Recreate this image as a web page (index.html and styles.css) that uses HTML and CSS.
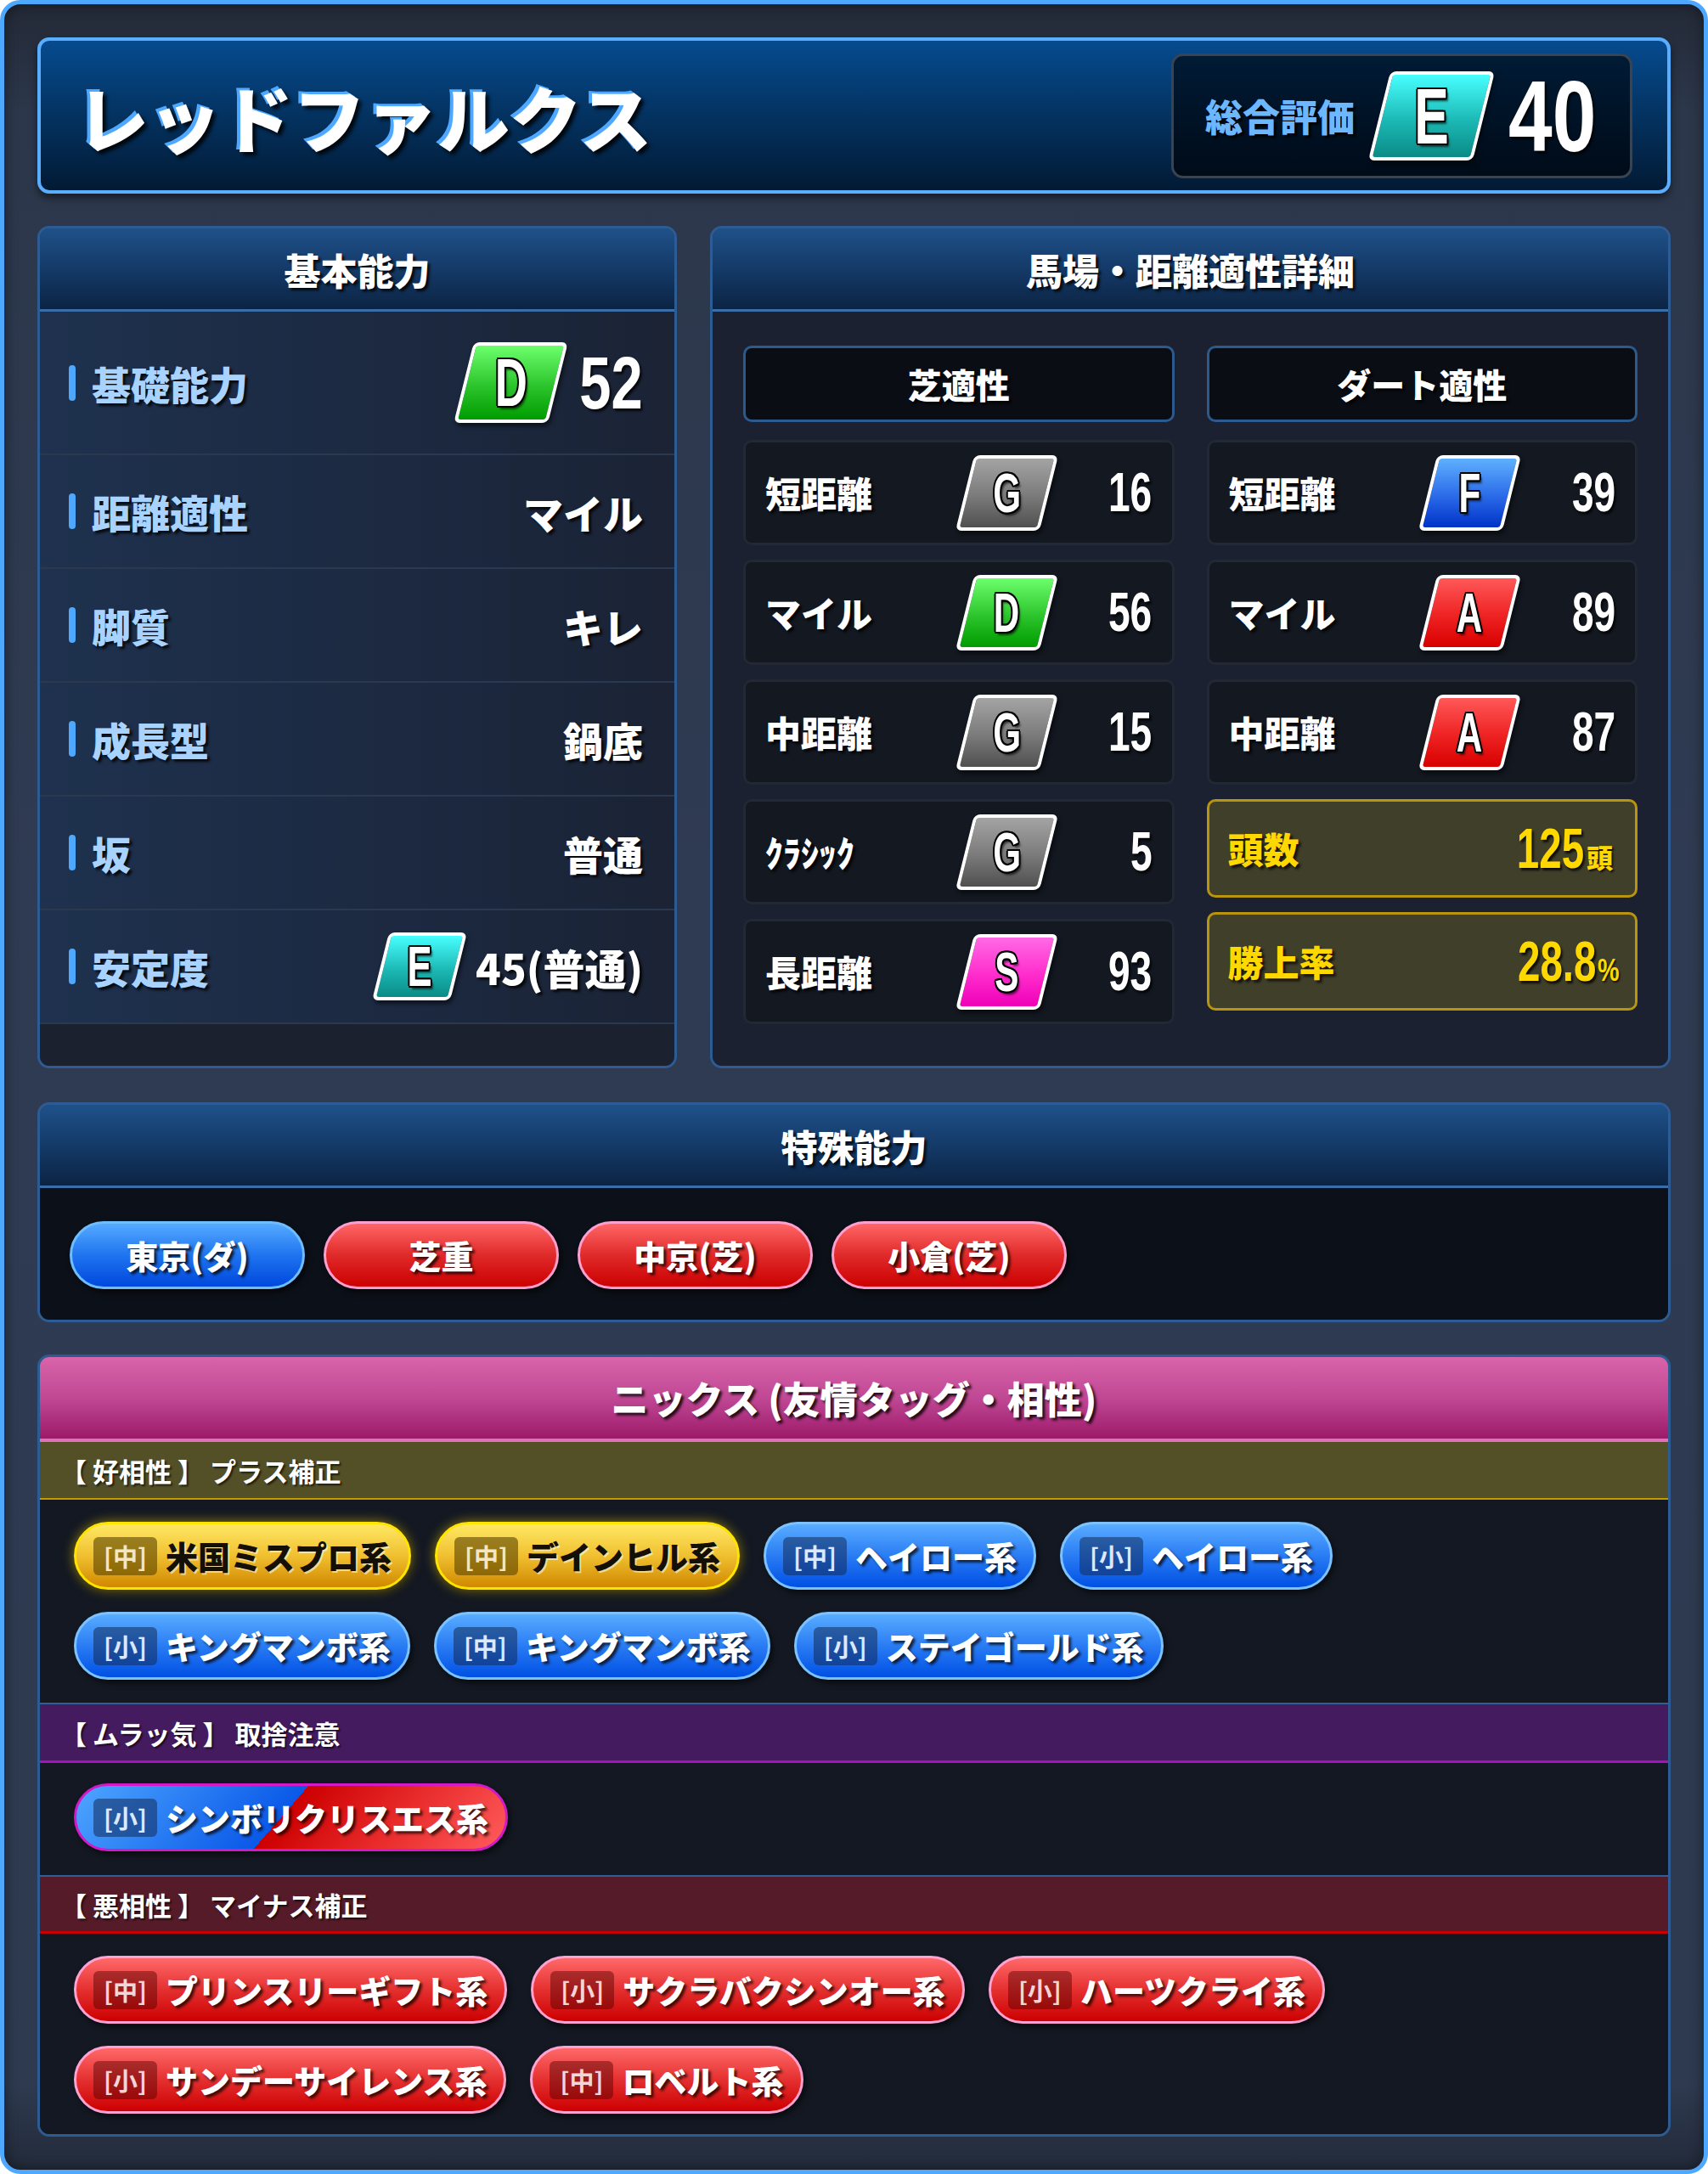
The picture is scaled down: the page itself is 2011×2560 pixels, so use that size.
FILE: index.html
```html
<!DOCTYPE html>
<html lang="ja">
<head>
<meta charset="utf-8">
<title>レッドファルクス</title>
<link rel="stylesheet" href="styles.css">
</head>
<body>
<div class="frame">
  <header class="title-bar">
    <h1 class="horse-name">レッドファルクス</h1>
    <div class="overall">
      <span class="overall-label">総合評価</span>
      <span class="grade grade-xl grade-e"><span class="grade-letter">E</span></span>
      <span class="num overall-num">40</span>
    </div>
  </header>

  <div class="top-grid">
    <section class="panel">
      <h2 class="panel-head">基本能力</h2>
      <div class="basic-body">
        <div class="stat-row first">
          <span class="stat-label">基礎能力</span>
          <span class="stat-value">
            <span class="grade grade-lg grade-d"><span class="grade-letter">D</span></span>
            <span class="num basic-num">52</span>
          </span>
        </div>
        <div class="stat-row">
          <span class="stat-label">距離適性</span>
          <span class="stat-value">マイル</span>
        </div>
        <div class="stat-row">
          <span class="stat-label">脚質</span>
          <span class="stat-value">キレ</span>
        </div>
        <div class="stat-row">
          <span class="stat-label">成長型</span>
          <span class="stat-value">鍋底</span>
        </div>
        <div class="stat-row">
          <span class="stat-label">坂</span>
          <span class="stat-value">普通</span>
        </div>
        <div class="stat-row">
          <span class="stat-label">安定度</span>
          <span class="stat-value">
            <span class="grade grade-md grade-e"><span class="grade-letter">E</span></span>
            <span class="stable-text">45(普通)</span>
          </span>
        </div>
        <div class="basic-foot"></div>
      </div>
    </section>

    <section class="panel">
      <h2 class="panel-head">馬場・距離適性詳細</h2>
      <div class="fit-body">
        <div class="fit-col">
          <div class="col-head">芝適性</div>
          <div class="cell">
            <span class="cell-label">短距離</span>
            <span class="grade grade-sm grade-g"><span class="grade-letter">G</span></span>
            <span class="num cell-num">16</span>
          </div>
          <div class="cell">
            <span class="cell-label">マイル</span>
            <span class="grade grade-sm grade-d"><span class="grade-letter">D</span></span>
            <span class="num cell-num">56</span>
          </div>
          <div class="cell">
            <span class="cell-label">中距離</span>
            <span class="grade grade-sm grade-g"><span class="grade-letter">G</span></span>
            <span class="num cell-num">15</span>
          </div>
          <div class="cell">
            <span class="cell-label">ｸﾗｼｯｸ</span>
            <span class="grade grade-sm grade-g"><span class="grade-letter">G</span></span>
            <span class="num cell-num">5</span>
          </div>
          <div class="cell">
            <span class="cell-label">長距離</span>
            <span class="grade grade-sm grade-s"><span class="grade-letter">S</span></span>
            <span class="num cell-num">93</span>
          </div>
        </div>
        <div class="fit-col">
          <div class="col-head">ダート適性</div>
          <div class="cell">
            <span class="cell-label">短距離</span>
            <span class="grade grade-sm grade-f"><span class="grade-letter">F</span></span>
            <span class="num cell-num">39</span>
          </div>
          <div class="cell">
            <span class="cell-label">マイル</span>
            <span class="grade grade-sm grade-a"><span class="grade-letter">A</span></span>
            <span class="num cell-num">89</span>
          </div>
          <div class="cell">
            <span class="cell-label">中距離</span>
            <span class="grade grade-sm grade-a"><span class="grade-letter">A</span></span>
            <span class="num cell-num">87</span>
          </div>
          <div class="yield">
            <span class="yield-label">頭数</span>
            <span class="yield-value"><span class="num yield-num">125</span><span class="yield-unit">頭</span></span>
          </div>
          <div class="yield">
            <span class="yield-label">勝上率</span>
            <span class="yield-value"><span class="num yield-num">28.8</span><span class="yield-unit pct">%</span></span>
          </div>
        </div>
      </div>
    </section>
  </div>

  <section class="panel special">
    <h2 class="panel-head">特殊能力</h2>
    <div class="special-body">
      <span class="pill pill-blue">東京(ダ)</span>
      <span class="pill pill-red">芝重</span>
      <span class="pill pill-red">中京(芝)</span>
      <span class="pill pill-red">小倉(芝)</span>
    </div>
  </section>

  <section class="panel nicks">
    <h2 class="panel-head nicks-head">ニックス (友情タッグ・相性)</h2>
    <div class="band band-good">【 好相性 】 プラス補正</div>
    <div class="chip-area area-good">
      <div class="chip-row">
        <span class="chip chip-gold"><span class="chip-tag">[中]</span><span class="chip-name">米国ミスプロ系</span></span>
        <span class="chip chip-gold"><span class="chip-tag">[中]</span><span class="chip-name">デインヒル系</span></span>
        <span class="chip chip-blue"><span class="chip-tag">[中]</span><span class="chip-name">ヘイロー系</span></span>
        <span class="chip chip-blue"><span class="chip-tag">[小]</span><span class="chip-name">ヘイロー系</span></span>
      </div>
      <div class="chip-row">
        <span class="chip chip-blue"><span class="chip-tag">[小]</span><span class="chip-name">キングマンボ系</span></span>
        <span class="chip chip-blue"><span class="chip-tag">[中]</span><span class="chip-name">キングマンボ系</span></span>
        <span class="chip chip-blue"><span class="chip-tag">[小]</span><span class="chip-name">ステイゴールド系</span></span>
      </div>
    </div>
    <div class="band band-mix">【 ムラッ気 】 取捨注意</div>
    <div class="chip-area area-mix">
      <div class="chip-row">
        <span class="chip chip-mix"><span class="chip-tag">[小]</span><span class="chip-name">シンボリクリスエス系</span></span>
      </div>
    </div>
    <div class="band band-bad">【 悪相性 】 マイナス補正</div>
    <div class="chip-area area-bad">
      <div class="chip-row">
        <span class="chip chip-red"><span class="chip-tag">[中]</span><span class="chip-name">プリンスリーギフト系</span></span>
        <span class="chip chip-red"><span class="chip-tag">[小]</span><span class="chip-name">サクラバクシンオー系</span></span>
        <span class="chip chip-red"><span class="chip-tag">[小]</span><span class="chip-name">ハーツクライ系</span></span>
      </div>
      <div class="chip-row">
        <span class="chip chip-red"><span class="chip-tag">[小]</span><span class="chip-name">サンデーサイレンス系</span></span>
        <span class="chip chip-red"><span class="chip-tag">[中]</span><span class="chip-name">ロベルト系</span></span>
      </div>
    </div>
  </section>
</div>
</body>
</html>
```

FILE: styles.css
```css
* { box-sizing: border-box; margin: 0; padding: 0; }
html, body { background: #ffffff; }
body {
  width: 2011px;
  height: 2560px;
  font-family: "Noto Sans CJK JP", "Noto Sans", sans-serif;
  font-weight: 900;
  color: #ffffff;
}

.frame {
  width: 2011px;
  height: 2560px;
  border: 5px solid #4ea8ff;
  border-radius: 24px;
  padding: 39px;
  display: flex;
  flex-direction: column;
  gap: 38px;
  background: linear-gradient(180deg, #232a37 0%, #2c374b 5%, #2f3b52 40%, #2e3a50 96%, #232b3a 100%);
  box-shadow: inset 0 0 16px rgba(0, 0, 0, .45);
}

/* ---------- title ---------- */
.title-bar {
  flex: none;
  height: 184px;
  display: flex;
  align-items: center;
  justify-content: space-between;
  padding: 0 41px 0 42px;
  border: 4px solid #5aaeff;
  border-radius: 14px;
  background: linear-gradient(180deg, #064b8f 0%, #043565 45%, #021a34 100%);
  box-shadow: 0 5px 10px rgba(0, 0, 0, .5);
}
.horse-name {
  font-size: 85px;
  font-weight: 900;
  line-height: 1;
  text-shadow: -4px -3px 0 #4ea8ff, 4px 4px 4px rgba(0, 0, 0, .85);
}
.overall {
  width: 543px;
  height: 147px;
  display: flex;
  align-items: center;
  padding: 0 39px 0 37px;
  border: 3px solid #3a434f;
  border-radius: 14px;
  background: linear-gradient(180deg, #001b35, #000b18);
}
.overall-label {
  font-size: 44px;
  line-height: 1;
  color: #6db7ff;
  margin-right: 29px;
  text-shadow: 3px 3px 3px rgba(0, 0, 0, .9);
}

/* ---------- numbers & grades ---------- */
.num {
  display: inline-block;
  font-family: "Liberation Sans", Arial, sans-serif;
  font-weight: 700;
  line-height: 1;
  transform: scaleX(.72);
  transform-origin: right center;
  text-shadow: 3px 3px 3px rgba(0, 0, 0, .8);
}
.overall-num { font-size: 119px; transform: scaleX(.78); }

.grade {
  flex: none;
  display: inline-flex;
  align-items: center;
  justify-content: center;
  border: 4px solid #ffffff;
  border-radius: 7px;
  transform: skewX(-14deg);
  box-shadow: 3px 4px 5px rgba(0, 0, 0, .55);
}
.grade-letter {
  display: inline-block;
  font-family: "Liberation Sans", Arial, sans-serif;
  font-weight: 700;
  line-height: 1;
  color: #ffffff;
  transform: skewX(14deg) scaleX(.66);
  text-shadow: -2px -2px 0 #000, 2px -2px 0 #000, -2px 2px 0 #000, 2px 2px 0 #000,
               0 -2px 0 #000, 0 2px 0 #000, -3px 0 0 #000, 3px 0 0 #000,
               4px 4px 3px rgba(0, 0, 0, .6);
}
.grade-xl { width: 123px; height: 105px; font-size: 92px; }
.grade-lg { width: 111px; height: 95px; font-size: 80px; }
.grade-md { width: 92px; height: 80px; font-size: 66px; }
.grade-sm { width: 99px; height: 89px; font-size: 64px; }
.grade-e { background: linear-gradient(180deg, #48ffff 0%, #1cb9b5 55%, #0a8b86 100%); }
.grade-d { background: linear-gradient(180deg, #6cff6c 0%, #2cc42c 55%, #009c00 100%); }
.grade-g { background: linear-gradient(180deg, #a4a4a4 0%, #7a7a7a 55%, #505050 100%); }
.grade-f { background: linear-gradient(180deg, #5fb0ff 0%, #2a6ae8 55%, #0032c8 100%); }
.grade-a { background: linear-gradient(180deg, #ff5858 0%, #ee2222 55%, #d80000 100%); }
.grade-s { background: linear-gradient(180deg, #ff6ae6 0%, #ff2ccc 55%, #ee00b8 100%); }

/* ---------- panels ---------- */
.top-grid {
  flex: none;
  height: 992px;
  display: grid;
  grid-template-columns: 753px 1131px;
  gap: 39px;
}
.panel {
  border: 3px solid #2c5c93;
  border-radius: 14px;
  overflow: hidden;
  display: flex;
  flex-direction: column;
}
.panel-head {
  flex: none;
  height: 98px;
  display: flex;
  align-items: center;
  justify-content: center;
  font-size: 43px;
  font-weight: 900;
  background: linear-gradient(180deg, #1f5189 0%, #143a68 50%, #0c2443 100%);
  border-bottom: 3px solid #3a6ea8;
  text-shadow: 3px 3px 3px rgba(0, 0, 0, .8);
}

/* basic */
.basic-body {
  flex: 1;
  display: flex;
  flex-direction: column;
  background: #1c2130;
}
.stat-row {
  flex: none;
  height: 134px;
  display: flex;
  align-items: center;
  justify-content: space-between;
  padding: 0 37px 0 34px;
  border-bottom: 2px solid #2a3850;
  background: linear-gradient(90deg, #1e314e 0%, #1c2a42 50%, #1b2335 100%);
}
.stat-row.first { height: 169px; }
.stat-label {
  display: flex;
  align-items: center;
  font-size: 46px;
  line-height: 1;
  color: #a9d3ff;
  text-shadow: 3px 3px 3px rgba(0, 0, 0, .8);
}
.stat-label::before {
  content: "";
  width: 8px;
  height: 42px;
  border-radius: 4px;
  background: #4ea8ff;
  margin-right: 19px;
}
.stat-value {
  display: flex;
  align-items: center;
  font-size: 47px;
  line-height: 1;
  text-shadow: 3px 3px 3px rgba(0, 0, 0, .8);
}
.basic-num { font-size: 87px; margin-left: 3px; transform: scaleX(.77); }
.stable-text { font-size: 49px; margin-left: 20px; }
.basic-foot { flex: 1; }

/* fit */
.fit-body {
  flex: 1;
  background: #1b2130;
  padding: 40px 36px 0;
  display: grid;
  grid-template-columns: 1fr 1fr;
  gap: 38px;
  align-content: start;
}
.fit-col {
  display: flex;
  flex-direction: column;
  gap: 17px;
}
.col-head {
  height: 90px;
  margin-bottom: 4px;
  display: flex;
  align-items: center;
  justify-content: center;
  font-size: 40px;
  background: #0a0d13;
  border: 3px solid #2c5a8c;
  border-radius: 10px;
  text-shadow: 3px 3px 3px rgba(0, 0, 0, .8);
}
.cell {
  height: 124px;
  display: grid;
  grid-template-columns: 1fr 99px 122px;
  align-items: center;
  padding: 0 23px;
  background: #131821;
  border: 3px solid #222834;
  border-radius: 10px;
}
.cell-label {
  font-size: 42px;
  line-height: 1;
  text-shadow: 3px 3px 3px rgba(0, 0, 0, .8);
}
.cell-num { justify-self: end; font-size: 64px; }
.yield {
  height: 116px;
  display: flex;
  align-items: center;
  justify-content: space-between;
  padding: 0 26px 0 22px;
  background: #403f2a;
  border: 3px solid #b8950c;
  border-radius: 10px;
  color: #ffd800;
}
.yield-label {
  font-size: 42px;
  line-height: 1;
  text-shadow: 3px 3px 3px rgba(0, 0, 0, .7);
}
.yield-value { display: flex; align-items: baseline; }
.yield-num { font-size: 66px; }
.yield-unit {
  font-size: 31px;
  margin-left: 3px;
  text-shadow: 2px 2px 2px rgba(0, 0, 0, .7);
}
.yield-unit.pct {
  display: inline-block;
  font-family: "Liberation Sans", Arial, sans-serif;
  font-weight: 700;
  font-size: 36px;
  margin-left: 2px;
  margin-right: -14px;
  transform: scaleX(.8);
  transform-origin: left center;
}

/* special */
.special { flex: none; height: 259px; margin-top: 2px; }
.special-body {
  flex: 1;
  background: #0c1018;
  display: flex;
  gap: 22px;
  padding: 39px 35px 0;
}
.pill {
  width: 277px;
  height: 80px;
  display: flex;
  align-items: center;
  justify-content: center;
  border: 3px solid;
  border-radius: 40px;
  font-size: 38px;
  line-height: 1;
  text-shadow: 3px 3px 3px rgba(0, 0, 0, .75);
  box-shadow: 3px 4px 6px rgba(0, 0, 0, .6);
}
.pill-blue { background: linear-gradient(180deg, #55aaff 0%, #1f74f0 50%, #0048dd 100%); border-color: #6dbdff; }
.pill-red { background: linear-gradient(180deg, #ff6666 0%, #e02a2a 50%, #cc0000 100%); border-color: #ff9fcf; }

/* nicks */
.nicks { flex: none; height: 921px; }
.nicks-head {
  height: 100px;
  font-size: 44px;
  border-bottom: 4px solid #e070b8;
  background: linear-gradient(180deg, #d964aa 0%, #c04894 50%, #9c1a69 100%);
}
.band {
  flex: none;
  display: flex;
  align-items: center;
  padding: 0 24px;
  font-size: 31px;
  font-weight: 700;
  line-height: 1;
  text-shadow: 2px 2px 2px rgba(0, 0, 0, .6);
}
.band-good { height: 68px; background: #534f27; border-bottom: 2px solid #c09a00; }
.band-mix { height: 71px; background: #451b60; border-top: 2px solid #2f5f96; border-bottom: 3px solid #a612c0; }
.band-bad { height: 69px; background: #551b28; border-top: 2px solid #2f5f96; border-bottom: 3px solid #c80000; }

.chip-area {
  flex: none;
  background: #131822;
  padding: 26px 40px 0;
  display: flex;
  flex-direction: column;
  gap: 26px;
}
.area-good { height: 239px; }
.area-mix { height: 132px; padding-top: 24px; }
.area-bad { flex: 1; }
.chip-row { display: flex; gap: 28px; }
.chip {
  height: 80px;
  display: flex;
  align-items: center;
  padding: 0 20px;
  border: 3px solid;
  border-radius: 40px;
  box-shadow: 3px 4px 6px rgba(0, 0, 0, .55);
}
.chip-tag {
  width: 75px;
  height: 45px;
  display: flex;
  align-items: center;
  justify-content: center;
  border-radius: 6px;
  font-size: 29px;
  font-weight: 700;
  line-height: 1;
}
.chip-name {
  margin-left: 10px;
  font-size: 38px;
  line-height: 1;
  text-shadow: 3px 3px 3px rgba(0, 0, 0, .7);
}
.chip-gold {
  background: linear-gradient(180deg, #ffe864 0%, #f0c030 50%, #d08800 100%);
  border-color: #ffe400;
  box-shadow: 0 0 14px rgba(255, 214, 0, .55), 3px 4px 6px rgba(0, 0, 0, .4);
}
.chip-gold .chip-tag { background: rgba(90, 66, 0, .6); color: #f3e6c4; }
.chip-gold .chip-name { color: #151006; text-shadow: 2px 2px 0 rgba(255, 255, 255, .55); }
.chip-blue {
  background: linear-gradient(180deg, #58acff 0%, #2a7cf4 50%, #0050e4 100%);
  border-color: #7cc2ff;
}
.chip-blue .chip-tag { background: rgba(18, 44, 90, .55); color: #dce8ff; }
.chip-red {
  background: linear-gradient(180deg, #ff6868 0%, #e53030 50%, #cc0000 100%);
  border-color: #ffa2d2;
}
.chip-red .chip-tag { background: rgba(80, 0, 0, .45); color: #f4d4d4; }
.chip-mix {
  background: linear-gradient(131deg, #4ea6ff 0%, #0a58e8 48%, #cc0000 48%, #e82a2a 72%, #ff5c5c 100%);
  border-color: #d21ac6;
}
.chip-mix .chip-tag { background: rgba(18, 44, 90, .55); color: #dce8ff; }
```
